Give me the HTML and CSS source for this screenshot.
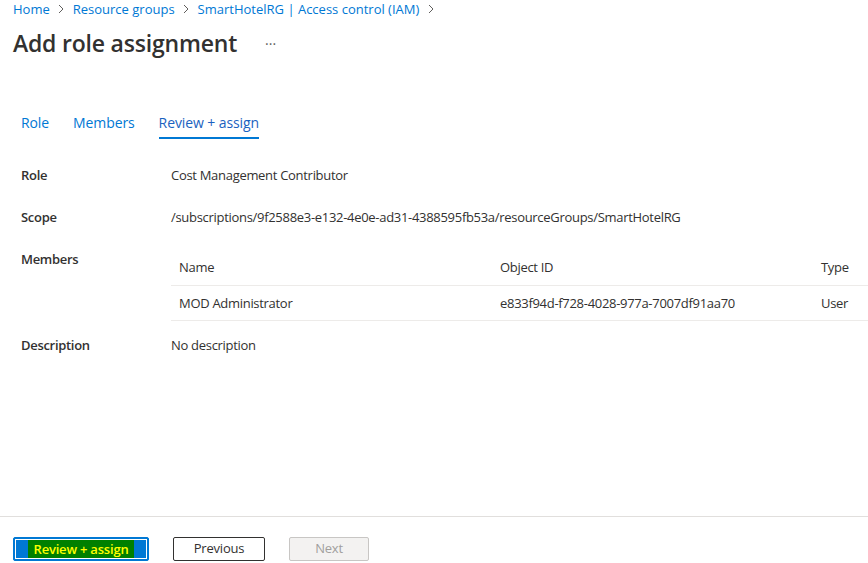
FILE: index.html
```html
<!DOCTYPE html>
<html lang="en">
<head>
<meta charset="utf-8">
<title>Add role assignment</title>
<link rel="stylesheet" href="styles.css">
</head>
<body>
<div class="page">
  <header class="top">
    <nav class="crumbs">
      <a class="crumb">Home</a><span class="chev"><svg width="8" height="10" viewBox="0 0 8 10"><path d="M2 1l4 4-4 4" fill="none" stroke="#605e5c" stroke-width="1"/></svg></span>
      <a class="crumb">Resource groups</a><span class="chev"><svg width="8" height="10" viewBox="0 0 8 10"><path d="M2 1l4 4-4 4" fill="none" stroke="#605e5c" stroke-width="1"/></svg></span>
      <a class="crumb">SmartHotelRG | Access control (IAM)</a><span class="chev"><svg width="8" height="10" viewBox="0 0 8 10"><path d="M2 1l4 4-4 4" fill="none" stroke="#605e5c" stroke-width="1"/></svg></span>
    </nav>
    <div class="titlerow">
      <h1 class="title">Add role assignment</h1>
      <span class="more">···</span>
    </div>
  </header>

  <main class="main">
    <div class="tabs">
      <span class="tab">Role</span>
      <span class="tab">Members</span>
      <span class="tab active">Review + assign</span>
    </div>

    <div class="details">
      <div class="label">Role</div>
      <div class="value">Cost Management Contributor</div>

      <div class="label">Scope</div>
      <div class="value">/subscriptions/9f2588e3-e132-4e0e-ad31-4388595fb53a/resourceGroups/SmartHotelRG</div>

      <div class="label">Members</div>
      <div class="value">
        <div class="table">
          <div class="tr thead">
            <div class="c-name">Name</div>
            <div class="c-id">Object ID</div>
            <div class="c-type">Type</div>
          </div>
          <div class="tr">
            <div class="c-name">MOD Administrator</div>
            <div class="c-id">e833f94d-f728-4028-977a-7007df91aa70</div>
            <div class="c-type">User</div>
          </div>
        </div>
      </div>

      <div class="label">Description</div>
      <div class="value">No description</div>
    </div>
  </main>

  <footer class="footer">
    <button class="btn primary"><span class="hl">Review + assign</span></button>
    <button class="btn">Previous</button>
    <button class="btn disabled">Next</button>
  </footer>
</div>
</body>
</html>
```

FILE: styles.css
```css
* { box-sizing: border-box; }
html, body { margin: 0; padding: 0; }
body {
  font-family: "Open Sans", "Noto Sans", "Liberation Sans", sans-serif;
  font-size: 13px;
  color: #323130;
  background: #fff;
  width: 868px;
  overflow: hidden;
}
.page {
  height: 563px;
  display: flex;
  flex-direction: column;
}
.top { padding-left: 13px; }
.crumbs {
  display: flex;
  align-items: center;
  height: 18px;
  font-size: 13px;
}
.crumb { color: #0078d4; }
.chev {
  display: inline-flex;
  width: 23px;
  justify-content: center;
  align-items: center;
}
.titlerow {
  display: flex;
  align-items: center;
  margin-top: 9px;
  height: 32px;
}
.title {
  margin: 0;
  font-size: 23px;
  font-weight: 600;
  color: #323130;
  letter-spacing: -0.2px;
}
.more {
  margin-left: 28px;
  color: #605e5c;
  font-size: 14px;
}
.main { flex: 1; }
.tabs {
  display: flex;
  margin-top: 54px;
  padding-left: 21px;
  gap: 24px;
}
.tab {
  color: #0078d4;
  font-size: 14px;
  letter-spacing: -0.1px;
  height: 26px;
  line-height: 18px;
  padding-top: 1px;
  border-bottom: 2px solid transparent;
}
.tab.active {
  color: #1a62c0;
  border-bottom-color: #0078d4;
}
.details {
  display: grid;
  grid-template-columns: 150px 1fr;
  padding-left: 21px;
  margin-top: 27px;
  row-gap: 24px;
  line-height: 18px;
  letter-spacing: -0.3px;
}
.label { font-weight: 600; color: #323130; }
.value { color: #323130; white-space: nowrap; }
.table { width: 697px; margin-bottom: -9px; }
.tr {
  display: flex;
  height: 35px;
  align-items: center;
  border-bottom: 1px solid #edebe9;
  padding-left: 8px;
}
.tr.thead {
  height: 36px;
  align-items: flex-start;
  padding-top: 8px;
}
.c-name { width: 321px; }
.c-id { width: 321px; }
.c-type { flex: 1; }
.footer {
  border-top: 1px solid #e1dfdd;
  height: 47px;
  display: flex;
  align-items: flex-start;
  padding: 20px 0 0 13px;
  gap: 24px;
}
.btn {
  font-family: inherit;
  font-size: 13px;
  height: 24px;
  padding: 0 0 2px;
  border: 1px solid #323130;
  border-radius: 2px;
  background: #fff;
  color: #323130;
  width: 92px;
  letter-spacing: -0.2px;
  display: flex;
  align-items: center;
  justify-content: center;
}
.btn.primary {
  width: 136px;
  background: #0078d4;
  border: 1px solid #0078d4;
  outline: 1px solid #fff;
  outline-offset: -3px;
  font-weight: 600;
  padding: 0;
}
.hl {
  background: #008000;
  color: #ffff00;
  padding: 0 6px 1px;
  line-height: 18px;
  height: 18px;
  display: flex;
  align-items: center;
}
.btn.disabled {
  width: 80px;
  border-color: #c8c6c4;
  color: #a19f9d;
  background: #f3f2f1;
}
```
